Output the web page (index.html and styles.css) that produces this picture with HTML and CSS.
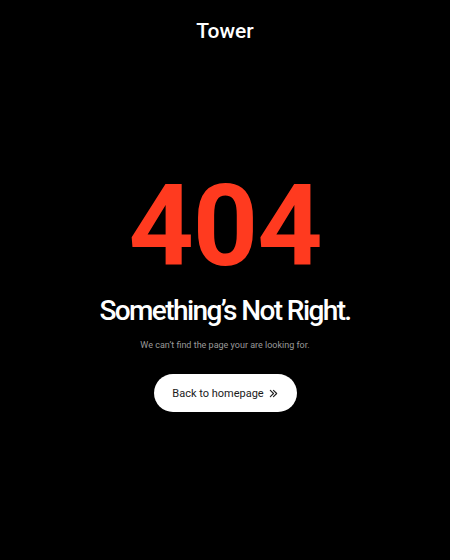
FILE: index.html
```html
<!DOCTYPE html>
<html lang="en">
<head>
<meta charset="utf-8">
<title>404</title>
<link rel="stylesheet" href="styles.css">
</head>
<body>
<div class="page">
  <header class="header"><span class="logo">Tower</span></header>
  <main class="main">
    <h1 class="code">404</h1>
    <h2 class="title">Something’s Not Right.</h2>
    <p class="sub">We can’t find the page your are looking for.</p>
    <a class="btn" href="#">Back to homepage
      <svg class="chev" width="9" height="9" viewBox="0 0 10 10" fill="none" stroke="#222" stroke-width="1.3" stroke-linecap="round" stroke-linejoin="round"><path d="M1.5 1.5 L5 5 L1.5 8.5"/><path d="M5 1.5 L8.5 5 L5 8.5"/></svg>
    </a>
  </main>
</div>
</body>
</html>
```
FILE: styles.css
```css
* { box-sizing: border-box; }
html, body { margin: 0; padding: 0; background: #000; }
body { font-family: Roboto, "Noto Sans", sans-serif; color: #fff; }
.page { width: 450px; height: 560px; display: flex; flex-direction: column; }
.header { height: 62px; display: flex; justify-content: center; padding-top: 17px; }
.logo { font-size: 21px; font-weight: 500; line-height: 28px; }
.main { display: flex; flex-direction: column; align-items: center; padding-top: 107px; }
.code { margin: 0; font-size: 114px; font-weight: 700; line-height: 114px; color: #ff3a1f; letter-spacing: -1px; }
.title { margin: 10px 0 0; font-size: 28px; font-weight: 500; line-height: 36px; letter-spacing: -1.6px; }
.sub { margin: 9px 0 0; font-size: 9px; line-height: 14px; color: #9a9a9a; }
.btn { margin-top: 22px; width: 143px; height: 38px; border-radius: 19px; background: #fff; color: #1a1a1a; text-decoration: none; display: flex; align-items: center; justify-content: center; gap: 5px; font-size: 11px; font-weight: 400; }
.chev { display: block; }
```
